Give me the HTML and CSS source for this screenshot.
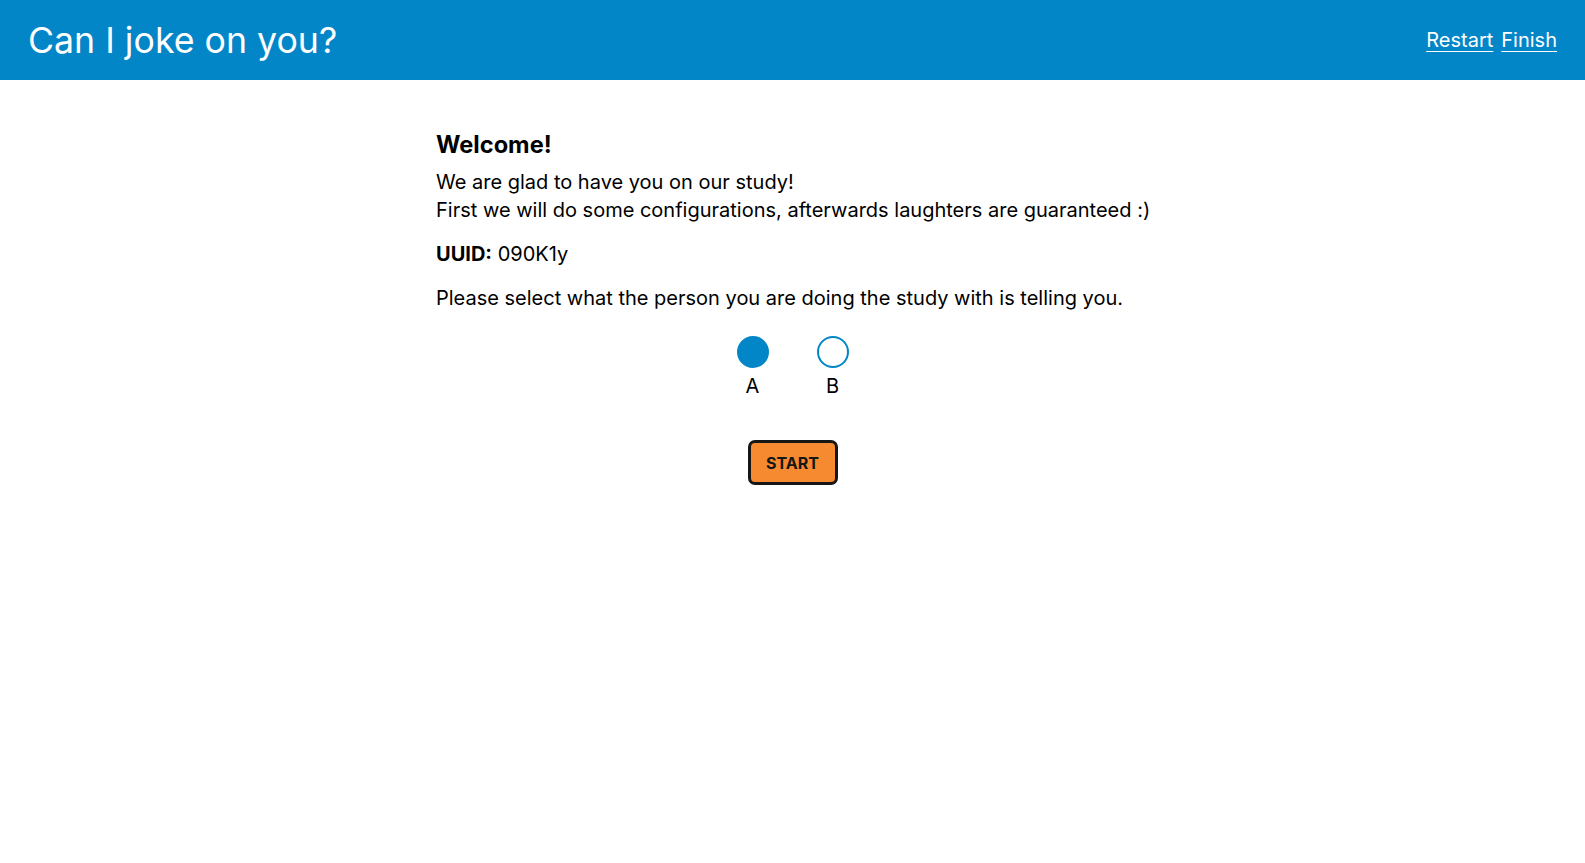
FILE: index.html
```html
<!DOCTYPE html>
<html lang="en">
<head>
<meta charset="utf-8">
<title>Can I joke on you?</title>
<link rel="stylesheet" href="styles.css">
</head>
<body>
<header class="topbar">
  <h1 class="title">Can I joke on you?</h1>
  <nav class="nav">
    <a href="#" class="nav-link">Restart</a>
    <a href="#" class="nav-link">Finish</a>
  </nav>
</header>
<main class="content">
  <h2 class="heading">Welcome!</h2>
  <p class="intro">We are glad to have you on our study!<br>First we will do some configurations, afterwards laughters are guaranteed :)</p>
  <p class="uuid"><strong>UUID:</strong> 090K1y</p>
  <p class="prompt">Please select what the person you are doing the study with is telling you.</p>
  <div class="choices">
    <label class="choice">
      <span class="dot dot-selected"></span>
      <span class="choice-label">A</span>
    </label>
    <label class="choice">
      <span class="dot"></span>
      <span class="choice-label">B</span>
    </label>
  </div>
  <div class="actions">
    <button class="start">START</button>
  </div>
</main>
</body>
</html>
```

FILE: styles.css
```css
* { box-sizing: border-box; }
html, body { margin: 0; padding: 0; background: #fff; }
body {
  font-family: Inter, "Noto Sans", sans-serif;
  color: #000;
}
.topbar {
  height: 80px;
  background: #0386c8;
  display: flex;
  align-items: center;
  justify-content: space-between;
  padding: 0 28px 0 28px;
}
.title {
  margin: 0;
  font-size: 35.7px;
  font-weight: 400;
  color: #fff;
}
.nav { display: flex; gap: 8px; }
.nav-link {
  color: #fff;
  font-size: 20px;
  text-decoration: underline;
  text-underline-offset: 4px;
  text-decoration-thickness: 1px;
}
.content {
  width: 713px;
  margin: 0 auto;
  padding-top: 51px;
}
.heading {
  margin: 0 0 9px 0;
  font-size: 23.6px;
  font-weight: 700;
  line-height: 28px;
}
.intro, .uuid, .prompt {
  margin: 0 0 16px 0;
  font-size: 20px;
  line-height: 28px;
}
.intro { white-space: nowrap; }
.choices {
  display: flex;
  justify-content: center;
  gap: 48px;
  margin-top: 24px;
}
.choice {
  display: flex;
  flex-direction: column;
  align-items: center;
  gap: 6px;
}
.dot {
  width: 32px;
  height: 32px;
  border-radius: 50%;
  border: 2px solid #0386c8;
  background: #fff;
}
.dot-selected { background: #0386c8; }
.choice-label { font-size: 20px; line-height: 24px; }
.actions {
  display: flex;
  justify-content: center;
  margin-top: 42px;
}
.start {
  width: 90px;
  height: 45px;
  background: #f58a30;
  border: 3px solid #161616;
  border-radius: 7px;
  font-family: Inter, "Noto Sans", sans-serif;
  font-weight: 700;
  font-size: 16px;
  color: #161616;
  padding: 0;
}
```
